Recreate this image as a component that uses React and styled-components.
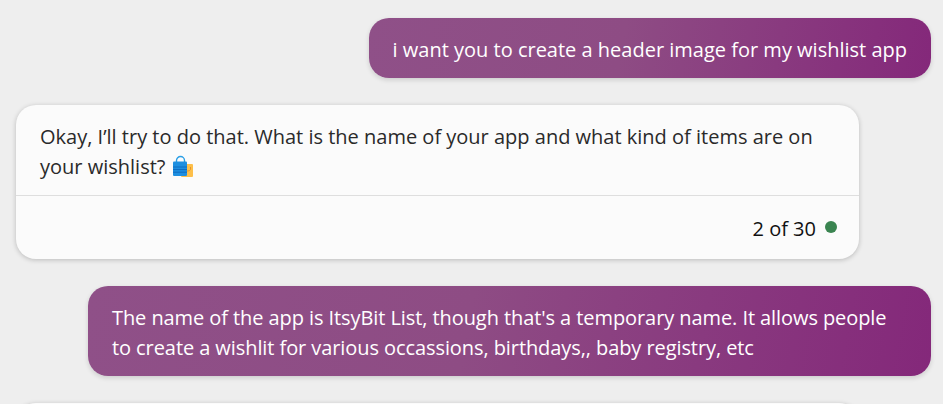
import React from 'react';
import styled, { createGlobalStyle } from 'styled-components';

const GlobalStyle = createGlobalStyle`
  html, body {
    margin: 0;
    height: 100%;
    overflow: hidden;
    background: #eeeeee;
  }
`;

function BagIcon() {
  return (
    <svg width="24" height="24" viewBox="0 0 24 24" aria-hidden="true">
      <rect x="10" y="9" width="12" height="13" rx="1" fill="#fdbf4a" />
      <path d="M14 12v2.5a3.2 3.2 0 0 0 5.5 0V12" fill="none" stroke="#e8942a" strokeWidth="1" />
      <path d="M5.5 7V5.5a4 4 0 0 1 8 0V7" fill="none" stroke="#2b9fe6" strokeWidth="1.4" />
      <rect x="2" y="6.5" width="14" height="14.5" rx="1" fill="#1e8fe0" />
      <path d="M2 12h14M2 14.6h14M2 17.2h14" stroke="#0f6cc0" strokeWidth="1" />
    </svg>
  );
}

export default function App() {
  return (
    <>
      <GlobalStyle />
      <Chat>
        <UserBubble>i want you to create a header image for my wishlist app</UserBubble>

        <BotCard>
          <BotText>
            Okay, I’ll try to do that. What is the name of your app and what kind of items are on
            your wishlist? <Emoji><BagIcon /></Emoji>
          </BotText>
          <BotFooter>
            <Counter>2 of 30</Counter>
            <StatusDot />
          </BotFooter>
        </BotCard>

        <UserBubble $tight>
          The name of the app is ItsyBit List, though that's a temporary name. It allows people
          to create a wishlit for various occassions, birthdays,, baby registry, etc
        </UserBubble>

        <NextCard />
      </Chat>
    </>
  );
}

const Chat = styled.div`
  display: flex;
  flex-direction: column;
  align-items: flex-end;
  gap: 27px;
  height: 404px;
  box-sizing: border-box;
  padding: 18px 12px 0 16px;
  overflow: hidden;
  font-family: "Open Sans", "Noto Sans", sans-serif;
  font-size: 20px;
  line-height: 30px;
`;

const UserBubble = styled.div`
  box-sizing: border-box;
  width: ${(p) => (p.$tight ? '843px' : 'auto')};
  padding: 17px 24px 13px;
  border-radius: 20px;
  color: #ffffff;
  letter-spacing: ${(p) => (p.$tight ? '-0.08px' : 'normal')};
  background: linear-gradient(100deg, #8f5088 0%, #8e4c84 45%, #84287a 100%);
  box-shadow: 0 2px 5px rgba(0, 0, 0, 0.14);
`;

const BotCard = styled.div`
  align-self: flex-start;
  width: 843px;
  border-radius: 20px;
  background: #fbfbfb;
  box-shadow: 0 1px 5px rgba(0, 0, 0, 0.22);
  color: #2a2a2a;
`;

const BotText = styled.div`
  padding: 17px 24px 13px;
  border-bottom: 1px solid #dedede;
  height: 60px;
`;

const Emoji = styled.span`
  display: inline-block;
  width: 24px;
  height: 24px;
  vertical-align: -5px;
`;

const BotFooter = styled.div`
  display: flex;
  justify-content: flex-end;
  align-items: center;
  gap: 9px;
  height: 63px;
  padding: 0 22px 0 0;
`;

const Counter = styled.span`
  padding-top: 2px;
  color: #111111;
`;

const StatusDot = styled.span`
  width: 12px;
  height: 12px;
  margin-bottom: 2px;
  border-radius: 50%;
  background: #3a8450;
`;

const NextCard = styled.div`
  align-self: flex-start;
  flex: none;
  width: 843px;
  height: 80px;
  border-radius: 20px;
  background: #fbfbfb;
  box-shadow: 0 1px 5px rgba(0, 0, 0, 0.22);
`;
